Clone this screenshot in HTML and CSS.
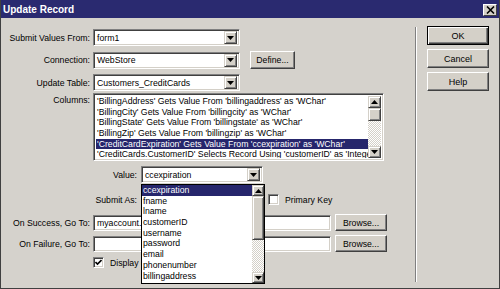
FILE: index.html
```html
<!DOCTYPE html>
<html>
<head>
<meta charset="utf-8">
<title>Update Record</title>
<link rel="stylesheet" href="styles.css">
</head>
<body>
<div class="dialog">
  <div class="titlebar">
    <span class="title">Update Record</span>
    <span class="close"><svg width="9" height="8" viewBox="0 0 9 8"><path d="M1 0.5 L8 7.5 M8 0.5 L1 7.5" stroke="#000" stroke-width="1.6"/></svg></span>
  </div>
  <div class="content">
    <div class="main">
      <div class="row r1">
        <span class="lbl">Submit Values From:</span>
        <div class="select w147"><span class="val">form1</span><span class="dd"><svg width="7" height="4" viewBox="0 0 7 4"><path d="M0 0 H7 L3.5 4 Z" fill="#000"/></svg></span></div>
      </div>
      <div class="row r2">
        <span class="lbl">Connection:</span>
        <div class="select w147"><span class="val">WebStore</span><span class="dd"><svg width="7" height="4" viewBox="0 0 7 4"><path d="M0 0 H7 L3.5 4 Z" fill="#000"/></svg></span></div>
        <div class="btn define">Define...</div>
      </div>
      <div class="row r3">
        <span class="lbl">Update Table:</span>
        <div class="select w147"><span class="val">Customers_CreditCards</span><span class="dd"><svg width="7" height="4" viewBox="0 0 7 4"><path d="M0 0 H7 L3.5 4 Z" fill="#000"/></svg></span></div>
      </div>
      <div class="row r4">
        <span class="lbl top">Columns:</span>
        <div class="list">
          <div class="items">
            <div class="item">'BillingAddress' Gets Value From 'billingaddress' as 'WChar'</div>
            <div class="item">'BillingCity' Gets Value From 'billingcity' as 'WChar'</div>
            <div class="item">'BillingState' Gets Value From 'billingstate' as 'WChar'</div>
            <div class="item">'BillingZip' Gets Value From 'billingzip' as 'WChar'</div>
            <div class="item sel">'CreditCardExpiration' Gets Value From 'ccexpiration' as 'WChar'</div>
            <div class="item">'CreditCards.CustomerID' Selects Record Using 'customerID' as 'Integer'</div>
          </div>
          <div class="vscroll">
            <div class="arrow"><svg width="7" height="4" viewBox="0 0 7 4"><path d="M0 4 H7 L3.5 0 Z" fill="#000"/></svg></div>
            <div class="thumb t1"></div>
            <div class="track"></div>
            <div class="arrow"><svg width="7" height="4" viewBox="0 0 7 4"><path d="M0 0 H7 L3.5 4 Z" fill="#000"/></svg></div>
          </div>
        </div>
      </div>
      <div class="row r5">
        <span class="lbl2">Value:</span>
        <div class="select w122"><span class="val">ccexpiration</span><span class="dd"><svg width="7" height="4" viewBox="0 0 7 4"><path d="M0 0 H7 L3.5 4 Z" fill="#000"/></svg></span></div>
      </div>
      <div class="row r6">
        <span class="lbl2">Submit As:</span>
        <div class="select w122"><span class="val"></span><span class="dd"><svg width="7" height="4" viewBox="0 0 7 4"><path d="M0 0 H7 L3.5 4 Z" fill="#000"/></svg></span></div>
        <span class="cb pk"></span>
        <span class="cbtext">Primary Key</span>
      </div>
      <div class="row r7">
        <span class="lbl">On Success, Go To:</span>
        <div class="field"><span class="val">myaccount.aspx</span></div>
        <div class="btn browse">Browse...</div>
      </div>
      <div class="row r8">
        <span class="lbl">On Failure, Go To:</span>
        <div class="field"></div>
        <div class="btn browse">Browse...</div>
      </div>
      <div class="row r9">
        <span class="cb checked"><svg width="7" height="7" viewBox="0 0 7 7"><path d="M0.5 3 L2.5 5 L6.5 1" stroke="#000" stroke-width="1.6" fill="none"/></svg></span>
        <span class="cbtext">Display debugging information on failure</span>
      </div>
    </div>
    <div class="sep"></div>
    <div class="side">
      <div class="btn sidebtn default">OK</div>
      <div class="btn sidebtn">Cancel</div>
      <div class="btn sidebtn">Help</div>
    </div>
  </div>
  <div class="popup">
    <div class="items">
      <div class="pitem sel">ccexpiration</div>
      <div class="pitem">fname</div>
      <div class="pitem">lname</div>
      <div class="pitem">customerID</div>
      <div class="pitem">username</div>
      <div class="pitem">password</div>
      <div class="pitem">email</div>
      <div class="pitem">phonenumber</div>
      <div class="pitem">billingaddress</div>
    </div>
    <div class="vscroll small">
      <div class="arrow"><svg width="7" height="4" viewBox="0 0 7 4"><path d="M0 4 H7 L3.5 0 Z" fill="#000"/></svg></div>
      <div class="thumb t2"></div>
      <div class="track"></div>
      <div class="arrow"><svg width="7" height="4" viewBox="0 0 7 4"><path d="M0 0 H7 L3.5 4 Z" fill="#000"/></svg></div>
    </div>
  </div>
</div>
</body>
</html>
```
FILE: styles.css
```css
* { box-sizing: border-box; }
body {
  margin: 0;
  font-family: "Liberation Sans", Arial, sans-serif;
  font-size: 8.7px;
  color: #000;
  background: #d4d0c8;
}
.dialog {
  position: relative;
  width: 500px;
  height: 289px;
  background: #d5d2cc;
  border-left: 1px solid #404040;
  border-right: 1px solid #404040;
  border-bottom: 1px solid #404040;
  display: flex;
  flex-direction: column;
}
.titlebar {
  height: 18px;
  flex: none;
  background: #2a2a70;
  display: flex;
  align-items: center;
  justify-content: space-between;
  padding: 0 2px 0 2px;
}
.title {
  color: #fff;
  font-weight: bold;
  font-size: 10px;
}
.close {
  width: 14px;
  height: 12px;
  background: #d4d0c8;
  border: 1px solid;
  border-color: #fff #404040 #404040 #fff;
  display: flex;
  align-items: center;
  justify-content: center;
  margin-top: 1px;
}
.content {
  flex: 1;
  display: flex;
}
.main {
  width: 414px;
  flex: none;
  padding-top: 11px;
}
.sep {
  width: 2px;
  border-left: 1px solid #808080;
  border-right: 1px solid #fff;
  margin: 9px 0 6px;
}
.side {
  padding: 8px 0 0 10px;
  display: flex;
  flex-direction: column;
  gap: 4px;
}
.row {
  display: flex;
  align-items: center;
}
.lbl {
  width: 92px;
  flex: none;
  padding-right: 3px;
  text-align: right;
  white-space: nowrap;
}
.lbl.top {
  align-self: flex-start;
  line-height: 11px;
  padding-top: 2px;
}
.lbl2 {
  width: 140px;
  flex: none;
  padding-right: 4px;
  text-align: right;
  white-space: nowrap;
}
.r1 { height: 17px; }
.r2 { height: 18px; margin-top: 5px; }
.r3 { height: 17px; margin-top: 5px; }
.r4 { height: 68px; margin-top: 2px; align-items: flex-start; }
.r5 { height: 17px; margin-top: 5px; }
.r6 { height: 17px; margin-top: 8px; }
.r7 { height: 17px; margin-top: 6px; }
.r8 { height: 17px; margin-top: 4px; }
.r9 { height: 11px; margin-top: 5px; padding-left: 92px; }

.select, .field, .list, .cb {
  background: #fff;
  border: 1px solid;
  border-color: #808080 #fff #fff #808080;
  box-shadow: inset 1px 1px #404040, inset -1px -1px #d4d0c8;
}
.select {
  height: 17px;
  display: flex;
  align-items: center;
  padding: 2px;
  flex: none;
}
.w147 { width: 147px; }
.w122 { width: 122px; }
.val {
  flex: 1;
  padding-left: 1px;
  white-space: nowrap;
  overflow: hidden;
}
.dd, .arrow, .thumb {
  background: #d4d0c8;
  border: 1px solid;
  border-color: #d4d0c8 #404040 #404040 #d4d0c8;
  box-shadow: inset 1px 1px #fff, inset -1px -1px #808080;
}
.dd {
  width: 13px;
  height: 13px;
  display: flex;
  align-items: center;
  justify-content: center;
  flex: none;
}
.dd svg, .arrow svg { display: block; }
.field {
  width: 238px;
  height: 16px;
  display: flex;
  align-items: center;
  padding: 2px;
  flex: none;
}
.btn {
  background: #d4d0c8;
  border: 1px solid;
  border-color: #fff #404040 #404040 #fff;
  box-shadow: inset -1px -1px #808080;
  display: flex;
  align-items: center;
  justify-content: center;
  flex: none;
  white-space: nowrap;
}
.define { width: 45px; height: 18px; margin-left: 10px; }
.browse { width: 52px; height: 17px; margin-left: 4px; }
.sidebtn { width: 62px; height: 19px; font-size: 9px; }
.btn.default {
  border: 1px solid #000;
  box-shadow: inset 1px 1px #fff, inset -1px -1px #404040, inset -2px -2px #808080;
}
.list {
  width: 291px;
  height: 68px;
  padding: 2px;
  display: flex;
  flex: none;
}
.items {
  flex: 1;
  overflow: hidden;
  min-width: 0;
}
.item {
  height: 10.67px;
  line-height: 10.67px;
  white-space: nowrap;
  padding-left: 1px;
}
.sel {
  background: #26266c;
  color: #fff;
}
.vscroll {
  width: 13px;
  flex: none;
  display: flex;
  flex-direction: column;
  background-color: #f0efec;
  background-image: repeating-conic-gradient(#d4d0c8 0 25%, #ffffff 0 50%);
  background-size: 2px 2px;
}
.vscroll.small { width: 12px; }
.arrow {
  height: 12px;
  flex: none;
  display: flex;
  align-items: center;
  justify-content: center;
}
.small .arrow { height: 11px; }
.thumb { flex: none; }
.t1 { height: 13px; }
.t2 { height: 44px; }
.track { flex: 1; }
.cb {
  width: 11px;
  height: 11px;
  flex: none;
  display: flex;
  align-items: center;
  justify-content: center;
}
.pk { margin-left: 5px; }
.cbtext {
  margin-left: 6px;
  white-space: nowrap;
}
.popup {
  position: absolute;
  left: 140px;
  top: 184px;
  width: 124px;
  height: 100px;
  background: #fff;
  border: 1px solid #000;
  display: flex;
  z-index: 2;
}
.pitem {
  height: 10.7px;
  line-height: 10.7px;
  padding-left: 1px;
  white-space: nowrap;
}
```
